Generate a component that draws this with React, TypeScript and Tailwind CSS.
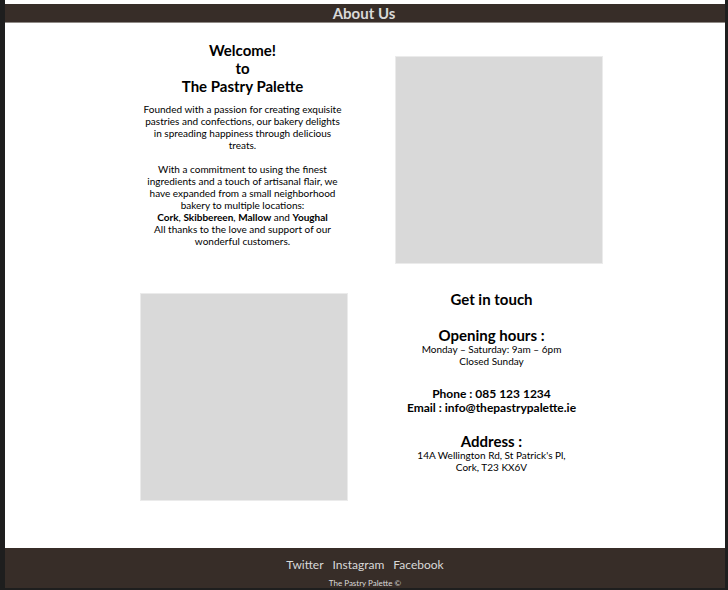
import type { ReactNode } from "react";

const socialLinks = ["Twitter", "Instagram", "Facebook"];

function Photo() {
  return <div className="aspect-square w-full border border-[#ebebeb] bg-[#d9d9d9]" />;
}

function ContactTitle({ children }: { children: ReactNode }) {
  return <h2 className="text-[15px] leading-4 font-bold">{children}</h2>;
}

export default function App() {
  return (
    <div className="flex min-h-screen flex-col border-r-[3px] border-b-2 border-l-[5px] border-[#1e1e1e] bg-white pt-1 font-[Lato,sans-serif] text-[10px] leading-3 text-black">
      <header className="border-b border-[#8f8a86] bg-[#372d28] pr-0.5 text-center">
        <h1 className="text-[15px] leading-[18px] font-bold text-[#d9d9d9]">About Us</h1>
      </header>

      <main className="flex grow justify-center pt-[18px] pl-3">
        <div className="grid grid-cols-[208px_208px] content-start gap-x-[47px] text-center">
          <section className="h-[252px] pr-0.5">
            <h2 className="text-[15px] leading-[18px] font-bold">
              Welcome!
              <br />
              to
              <br />
              The Pastry Palette
            </h2>
            <p className="mt-2">
              Founded with a passion for creating exquisite
              <br />
              pastries and confections, our bakery delights
              <br />
              in spreading happiness through delicious
              <br />
              treats.
            </p>
            <p className="mt-3">
              With a commitment to using the finest
              <br />
              ingredients and a touch of artisanal flair, we
              <br />
              have expanded from a small neighborhood
              <br />
              bakery to multiple locations:
              <br />
              <b>Cork</b>, <b>Skibbereen</b>, <b>Mallow</b> and <b>Youghal</b>
              <br />
              All thanks to the love and support of our
              <br />
              wonderful customers.
            </p>
          </section>
          <div className="pt-[15px]">
            <Photo />
          </div>
          <div>
            <Photo />
          </div>
          <section className="-mt-0.5 pr-[14px]">
            <ContactTitle>Get in touch</ContactTitle>
            <div className="mt-5">
              <ContactTitle>Opening hours :</ContactTitle>
              <p>
                Monday – Saturday: 9am – 6pm
                <br />
                Closed Sunday
              </p>
            </div>
            <div className="mt-5 text-[12px] leading-[14px] font-bold">
              <p>Phone : 085 123 1234</p>
              <p>
                Email : <a href="mailto:info@thepastrypalette.ie">info@thepastrypalette.ie</a>
              </p>
            </div>
            <address className="mt-[18px] not-italic">
              <ContactTitle>Address :</ContactTitle>
              <p>
                14A Wellington Rd, St Patrick's Pl,
                <br />
                Cork, T23 KX6V
              </p>
            </address>
          </section>
        </div>
      </main>

      <footer className="flex h-10 flex-col items-center justify-end bg-[#372d28] text-[#d9d9d9]">
        <nav className="flex gap-[9px] text-[12px] leading-[15px]">
          {socialLinks.map((name) => (
            <a key={name} href="#">
              {name}
            </a>
          ))}
        </nav>
        <p className="mt-[7px] text-[8px] leading-[9px]">The Pastry Palette ©</p>
      </footer>
    </div>
  );
}
